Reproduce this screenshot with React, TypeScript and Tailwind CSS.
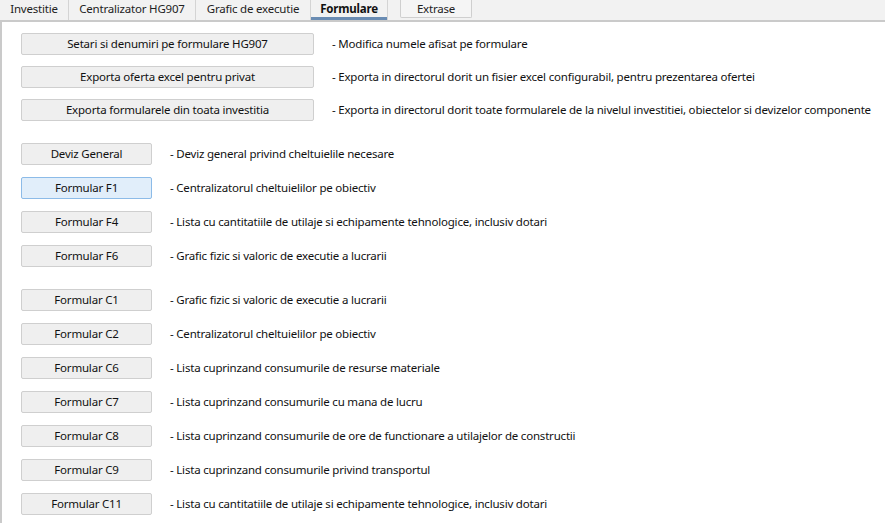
const topRows = [
  {
    label: "Setari si denumiri pe formulare HG907",
    desc: "- Modifica numele afisat pe formulare",
  },
  {
    label: "Exporta oferta excel pentru privat",
    desc: "- Exporta in directorul dorit un fisier excel configurabil, pentru prezentarea ofertei",
  },
  {
    label: "Exporta formularele din toata investitia",
    desc: "- Exporta in directorul dorit toate formularele de la nivelul investitiei, obiectelor si devizelor componente",
  },
];

const fRows = [
  { label: "Deviz General", desc: "- Deviz general privind cheltuielile necesare" },
  { label: "Formular F1", desc: "- Centralizatorul cheltuielilor pe obiectiv", hot: true },
  {
    label: "Formular F4",
    desc: "- Lista cu cantitatiile de utilaje si echipamente tehnologice, inclusiv dotari",
  },
  { label: "Formular F6", desc: "- Grafic fizic si valoric de executie a lucrarii" },
];

const cRows = [
  { label: "Formular C1", desc: "- Grafic fizic si valoric de executie a lucrarii" },
  { label: "Formular C2", desc: "- Centralizatorul cheltuielilor pe obiectiv" },
  { label: "Formular C6", desc: "- Lista cuprinzand consumurile de resurse materiale" },
  { label: "Formular C7", desc: "- Lista cuprinzand consumurile cu mana de lucru" },
  {
    label: "Formular C8",
    desc: "- Lista cuprinzand consumurile de ore de functionare a utilajelor de constructii",
  },
  { label: "Formular C9", desc: "- Lista cuprinzand consumurile privind transportul" },
  {
    label: "Formular C11",
    desc: "- Lista cu cantitatiile de utilaje si echipamente tehnologice, inclusiv dotari",
  },
];

type Row = { label: string; desc: string; hot?: boolean };

function FormRow({ row, wide }: { row: Row; wide?: boolean }) {
  return (
    <div className="flex h-[22px] items-center">
      <button
        className={
          (wide ? "w-[293px]" : "w-[131px]") +
          " h-[22px] shrink-0 rounded-[2px] border text-[11.5px] leading-none tracking-[-0.2px] text-[#111] " +
          (row.hot
            ? "border-[#8cbbe8] bg-[#e1eefa]"
            : "border-[#cfcfcf] bg-[#efefef]")
        }
      >
        {row.label}
      </button>
      <span className="ml-[18px] whitespace-nowrap text-[11.5px] tracking-[-0.2px] text-[#111]">
        {row.desc}
      </span>
    </div>
  );
}

function Tab({
  label,
  w,
  active,
}: {
  label: string;
  w: string;
  active?: boolean;
}) {
  return (
    <div
      className={
        w +
        " relative flex h-full items-center justify-center border-r border-[#d4d4d4] pb-[2px] text-[11.5px] tracking-[-0.2px] " +
        (active ? "font-bold text-[#111]" : "text-[#222]")
      }
    >
      {label}
      {active && (
        <div className="absolute bottom-0 left-0 right-0 h-[3px] bg-[#6a8cb3]" />
      )}
    </div>
  );
}

export default function App() {
  return (
    <div
      className="h-[523px] w-[885px] overflow-hidden bg-white"
      style={{ fontFamily: '"Segoe UI", "Noto Sans", sans-serif' }}
    >
      <div className="flex h-[22px] items-stretch border-b-2 border-[#cacaca] bg-[#f2f2f2]">
        <Tab label="Investitie" w="w-[69px]" />
        <Tab label="Centralizator HG907" w="w-[127px]" />
        <Tab label="Grafic de executie" w="w-[115px]" />
        <Tab label="Formulare" w="w-[77px]" active />
        <div className="ml-[12px] flex h-[18px] w-[72px] items-center justify-center rounded-b-[2px] border border-t-0 border-[#cfcfcf] bg-[#f5f5f5] text-[11.5px] tracking-[-0.2px] text-[#222]">
          Extrase
        </div>
      </div>
      <div className="h-full border-l-2 border-[#cacaca] pl-[19px] pt-[11px]">
        <div className="flex flex-col gap-[11px]">
          {topRows.map((r) => (
            <FormRow key={r.label} row={r} wide />
          ))}
        </div>
        <div className="mt-[22px] flex flex-col gap-[12px]">
          {fRows.map((r) => (
            <FormRow key={r.label} row={r} />
          ))}
        </div>
        <div className="mt-[22px] flex flex-col gap-[12px]">
          {cRows.map((r) => (
            <FormRow key={r.label} row={r} />
          ))}
        </div>
      </div>
    </div>
  );
}
